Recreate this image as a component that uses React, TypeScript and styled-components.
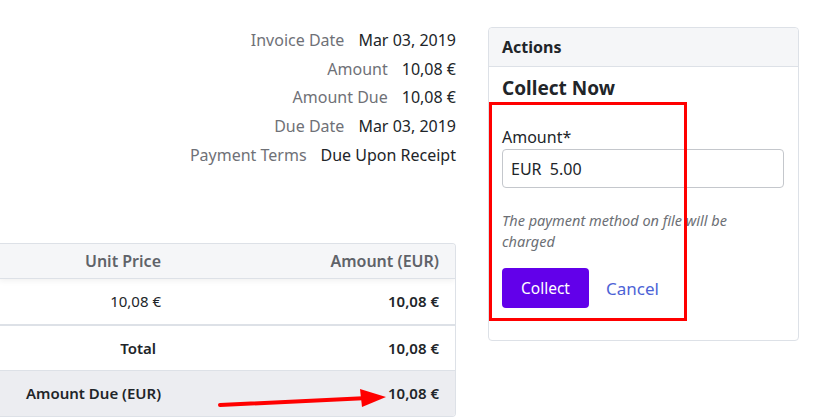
import styled, { createGlobalStyle } from "styled-components";

const GlobalStyle = createGlobalStyle`
  html, body {
    margin: 0;
    padding: 0;
    background: #fff;
  }

  body {
    font-family: "Noto Sans", "Open Sans", sans-serif;
    color: #212529;
    overflow: hidden;
  }
`;

const details = [
  { label: "Invoice Date", value: "Mar 03, 2019" },
  { label: "Amount", value: "10,08 €" },
  { label: "Amount Due", value: "10,08 €" },
  { label: "Due Date", value: "Mar 03, 2019" },
  { label: "Payment Terms", value: "Due Upon Receipt" },
];

export default function App() {
  return (
    <>
      <GlobalStyle />
      <Page>
        <LeftColumn>
          <Details>
            {details.map((d) => (
              <DetailRow key={d.label}>
                <DetailLabel>{d.label}</DetailLabel>
                <DetailValue>{d.value}</DetailValue>
              </DetailRow>
            ))}
          </Details>

          <Table>
            <HeadRow>
              <Cell $head>Unit Price</Cell>
              <Cell $head>Amount (EUR)</Cell>
            </HeadRow>
            <Row $thick>
              <Cell>10,08 €</Cell>
              <Cell $bold>10,08 €</Cell>
            </Row>
            <Row>
              <Cell $bold $inset>
                Total
              </Cell>
              <Cell $bold>10,08 €</Cell>
            </Row>
            <Row $shaded $last>
              <Cell $bold>Amount Due (EUR)</Cell>
              <Cell $bold>10,08 €</Cell>
            </Row>
          </Table>
        </LeftColumn>

        <Card>
          <CardHeader>Actions</CardHeader>
          <CardBody>
            <SectionTitle>Collect Now</SectionTitle>
            <Field>
              <FieldLabel>Amount*</FieldLabel>
              <Input defaultValue="EUR  5.00" />
            </Field>
            <HelpText>The payment method on file will be charged</HelpText>
            <ButtonRow>
              <PrimaryButton>Collect</PrimaryButton>
              <LinkButton>Cancel</LinkButton>
            </ButtonRow>
          </CardBody>
          <Highlight />
        </Card>

        <Arrow width="180" height="30" viewBox="0 0 180 30">
          <path d="M2 22 L150 15" stroke="#ff0000" strokeWidth="4" strokeLinecap="round" />
          <polygon points="142,6 168,14 144,24" fill="#ff0000" />
        </Arrow>
      </Page>
    </>
  );
}

const Page = styled.div`
  position: relative;
  display: flex;
  align-items: flex-start;
  gap: 32px;
  width: 814px;
  height: 419px;
`;

const LeftColumn = styled.div`
  display: flex;
  flex-direction: column;
  align-items: flex-end;
  width: 456px;
  padding-top: 26px;
`;

const Details = styled.div`
  display: flex;
  flex-direction: column;
  align-items: flex-end;
`;

const DetailRow = styled.div`
  display: flex;
  justify-content: flex-end;
  gap: 14px;
`;

const DetailLabel = styled.div`
  font-size: 16px;
  line-height: 28.7px;
  color: #6f7177;
`;

const DetailValue = styled.div`
  font-size: 16px;
  line-height: 28.7px;
  color: #212529;
`;

const Table = styled.div`
  margin-top: 73px;
  width: 456px;
  border: 1px solid #dde1e7;
  border-left: none;
  border-radius: 0 4px 4px 0;
  overflow: hidden;
`;

const HeadRow = styled.div`
  display: grid;
  grid-template-columns: 178px 1fr;
  height: 34px;
  align-items: center;
  background: #f5f6f8;
  border-bottom: 1px solid #dde1e7;
  box-shadow: 0 2px 6px rgba(0, 0, 0, 0.06);
  position: relative;
`;

const Row = styled.div<{ $thick?: boolean; $shaded?: boolean; $last?: boolean }>`
  display: grid;
  grid-template-columns: 178px 1fr;
  align-items: center;
  height: ${(p) => (p.$thick ? "47px" : "45px")};
  background: ${(p) => (p.$shaded ? "#ecedf1" : "#fff")};
  border-bottom: ${(p) =>
    p.$last ? "none" : p.$thick ? "2px solid #dde1e7" : "1px solid #dde1e7"};
  box-sizing: border-box;
`;

const Cell = styled.div<{ $head?: boolean; $bold?: boolean; $inset?: boolean }>`
  text-align: right;
  padding-right: ${(p) => (p.$inset ? "21px" : "16px")};
  font-size: ${(p) => (p.$head ? "16px" : "15px")};
  font-weight: ${(p) => (p.$head || p.$bold ? 600 : 400)};
  color: ${(p) => (p.$head ? "#5f6369" : "#212529")};
`;

const Card = styled.div`
  position: relative;
  margin-top: 27px;
  width: 311px;
  box-sizing: border-box;
  border: 1px solid #dde1e7;
  border-radius: 4px;
  background: #fff;
`;

const CardHeader = styled.div`
  height: 38px;
  display: flex;
  align-items: center;
  padding: 0 13px;
  background: #f5f6f8;
  border-bottom: 1px solid #dde1e7;
  border-radius: 4px 4px 0 0;
  font-size: 16px;
  font-weight: 700;
  color: #212529;
`;

const CardBody = styled.div`
  padding: 8px 14px 32px 13px;
`;

const SectionTitle = styled.h3`
  margin: 0 0 24px;
  font-size: 19px;
  line-height: 26px;
  font-weight: 700;
  color: #212529;
`;

const Field = styled.div`
  display: flex;
  flex-direction: column;
`;

const FieldLabel = styled.label`
  font-size: 16px;
  line-height: 24px;
  color: #212529;
`;

const Input = styled.input`
  box-sizing: border-box;
  width: 282px;
  height: 39px;
  padding: 0 8px;
  border: 1px solid #c4c7cc;
  border-radius: 4px;
  font-family: "Noto Sans", sans-serif;
  font-size: 16px;
  color: #212529;
  outline: none;
`;

const HelpText = styled.p`
  margin: 22px 0 16px;
  font-size: 14.5px;
  line-height: 21px;
  font-style: italic;
  color: #6c6f75;
  width: 262px;
`;

const ButtonRow = styled.div`
  display: flex;
  align-items: center;
  gap: 17px;
`;

const PrimaryButton = styled.button`
  height: 40px;
  padding: 0 19px;
  border: none;
  border-radius: 4px;
  background: #6200ea;
  color: #fff;
  font-family: "Noto Sans", sans-serif;
  font-size: 15.5px;
`;

const LinkButton = styled.button`
  border: none;
  background: none;
  padding: 0;
  color: #4d63d6;
  font-family: "Noto Sans", sans-serif;
  font-size: 17px;
`;

const Highlight = styled.div`
  position: absolute;
  left: 0;
  top: 74px;
  width: 198px;
  height: 219px;
  box-sizing: border-box;
  border: 3px solid #ff0000;
  pointer-events: none;
`;

const Arrow = styled.svg`
  position: absolute;
  left: 218px;
  top: 383px;
`;
